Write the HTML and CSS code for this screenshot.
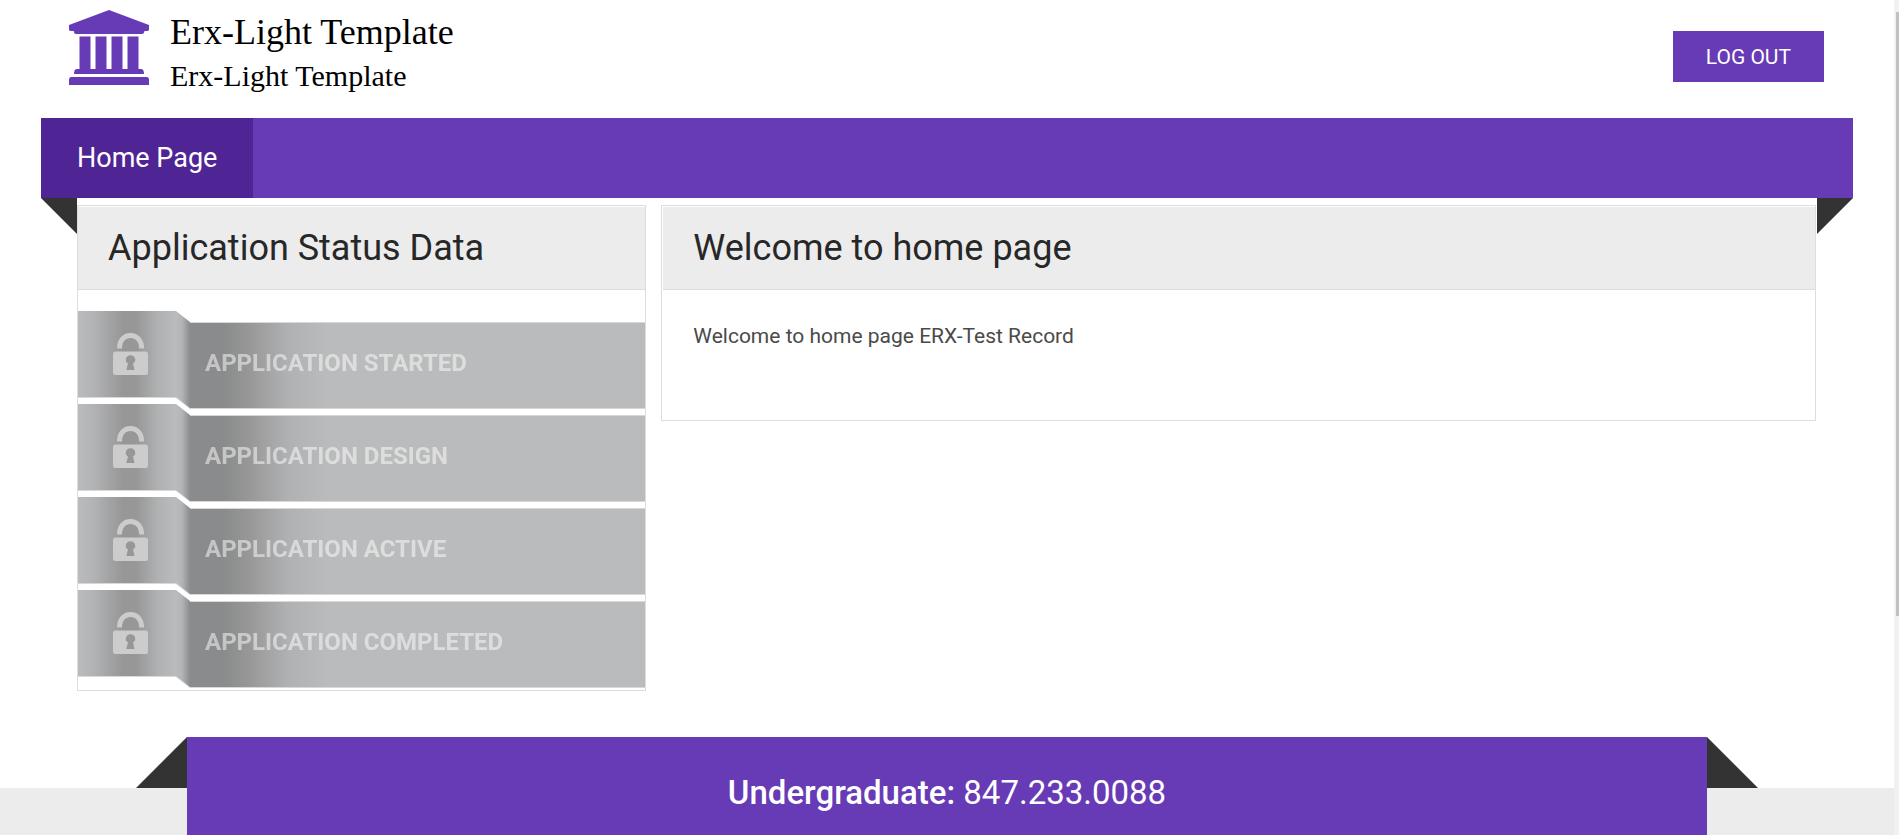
FILE: index.html
```html
<!DOCTYPE html>
<html lang="en">
<head>
    <meta charset="UTF-8">
    <meta name="viewport" content="width=device-width, initial-scale=1.0">
    <title>Erx-Light Template</title>
    <link rel="stylesheet" href="styles.css">
</head>
<body>
    <svg class="symbols" aria-hidden="true">
        <symbol id="lock" viewBox="0 0 35 43">
            <path d="M4 15.500C4 6 9.500 0 17.500 0S31.200 6 31.200 15.500H26.200C26.200 9 22.500 5 17.500 5S9 9 9 15.500Z"/>
            <path fill-rule="evenodd" d="M2.500 18.500H32.500Q35 18.500 35 21V39.500Q35 42 32.500 42H2.500Q0 42 0 39.500V21Q0 18.500 2.500 18.500ZM13.300 37H21.500L20 30.500Q22.300 29 22.300 27A4.800 4.800 0 0 0 12.700 27Q12.700 29 15 30.500Z"/>
        </symbol>
    </svg>

    <header class="header">
        <svg class="logo" viewBox="0 0 80 75" aria-hidden="true">
            <path d="M40 0L80 15V19.500Q80 21 78 21H75.500Q75 24 73 24H7Q5 24 4.800 21H2Q0 21 0 19.500V15Z"/>
            <path d="M10.500 26.500H21.500V59H26.500V26.500H37.500V59H42.500V26.500H53.500V59H58.500V26.500H69.500V59H72.500Q75 59.500 75 64H5Q5 59.500 7.500 59H10.500Z"/>
            <path d="M2.500 67H77.500Q80 67 80 70V75H0V70Q0 67 2.500 67Z"/>
        </svg>
        <div class="brand">
            <div class="brand-title">Erx-Light Template</div>
            <div class="brand-subtitle">Erx-Light Template</div>
        </div>
        <button type="button" class="logout">LOG OUT</button>
    </header>

    <nav class="nav">
        <a href="#" class="nav-link">Home Page</a>
    </nav>

    <main class="content">
        <section class="card status-card">
            <h2>Application Status Data</h2>
            <ul class="status-list">
                <li><svg class="lock"><use href="#lock"/></svg><span>APPLICATION STARTED</span></li>
                <li><svg class="lock"><use href="#lock"/></svg><span>APPLICATION DESIGN</span></li>
                <li><svg class="lock"><use href="#lock"/></svg><span>APPLICATION ACTIVE</span></li>
                <li><svg class="lock"><use href="#lock"/></svg><span>APPLICATION COMPLETED</span></li>
            </ul>
        </section>
        <section class="card welcome-card">
            <h2>Welcome to home page</h2>
            <p>Welcome to home page ERX-Test Record</p>
        </section>
    </main>

    <footer class="footer">
        <div class="contact"><strong>Undergraduate:</strong> 847.233.0088</div>
    </footer>

    <div class="scrollbar"></div>
</body>
</html>
```

FILE: styles.css
```css
* {
    box-sizing: border-box;
}
body {
    display: flex;
    flex-direction: column;
    min-height: 100vh;
    margin: 0;
    padding-right: 5px;
    font-family: Roboto, Arial, sans-serif;
    background-color: #fff;
}
.symbols {
    position: absolute;
    width: 0;
    height: 0;
}

/* header */
.header {
    display: flex;
    align-items: flex-start;
    padding: 10px 70px 0 69px;
    height: 118px;
}
.logo {
    width: 80px;
    height: 75px;
    margin-right: 21px;
    fill: #673ab6;
}
.brand {
    font-family: "Liberation Serif", "Times New Roman", serif;
    color: #000;
}
.brand-title {
    font-size: 36px;
    line-height: 44px;
}
.brand-subtitle {
    font-size: 30px;
    line-height: 44px;
}
.logout {
    margin: 21px 0 0 auto;
    padding: 0 33px;
    height: 51px;
    border: none;
    background-color: #673ab6;
    color: #fff;
    font-family: inherit;
    font-size: 21px;
    cursor: pointer;
}

/* navigation ribbon */
.nav {
    position: relative;
    display: flex;
    height: 80px;
    margin: 0 41px;
    background-color: #673ab6;
}
.nav::before,
.nav::after {
    content: "";
    position: absolute;
    top: 100%;
    width: 36px;
    height: 36px;
    background-color: #333;
}
.nav::before {
    left: 0;
    clip-path: polygon(0 0, 100% 0, 100% 100%);
}
.nav::after {
    right: 0;
    clip-path: polygon(0 0, 100% 0, 0 100%);
}
.nav-link {
    padding: 0 36px;
    background-color: #4f2595;
    color: #fff;
    font-size: 27px;
    line-height: 80px;
    text-decoration: none;
}

/* cards */
.content {
    display: flex;
    align-items: flex-start;
    gap: 15px;
    padding: 7px 78px 46px 77px;
}
.card {
    min-width: 0;
    border: 1px solid #ddd;
    padding-top: 1px;
}
.status-card {
    flex: 569 1 0;
}
.welcome-card {
    flex: 1155 1 0;
    padding-left: 1px;
}
.card h2 {
    margin: 0;
    padding: 0 30px;
    border-bottom: 1px solid #ddd;
    background-color: #ececec;
    color: #272727;
    font-size: 36px;
    font-weight: 400;
    line-height: 82px;
}
.card p {
    margin: 0;
    padding: 31px 30px 69px;
    color: #4a4a4a;
    font-size: 21px;
    line-height: 30px;
}

/* status steps */
.status-list {
    margin: 0;
    padding: 21px 0 3px;
    list-style: none;
    filter: drop-shadow(0 1px 0 #d8d8d8);
}
.status-list li {
    display: flex;
    align-items: center;
    height: 97px;
    padding-left: 35px;
    background:
        linear-gradient(#d8d8d8, #d8d8d8) 112px 11px / 100% 1px no-repeat,
        linear-gradient(to right, #babbbd 0, #b3b4b6 14px, #979797 45px, #979797 58px, #b0b1b2 80px, #babbbd 98px, #b3b4b5 104px, #8a8b8c 112px, #8a8b8c 146px, #989898 172px, #b0b1b3 210px, #babbbc 250px);
    clip-path: polygon(0 0, 98px 0, 112px 11px, 100% 11px, 100% 97px, 112px 97px, 98px 86px, 0 86px);
    color: rgba(255, 255, 255, 0.5);
    font-size: 24px;
    font-weight: 700;
}
.status-list li + li {
    margin-top: -4px;
}
.lock {
    width: 35px;
    height: 43px;
    margin: 0 57px 10px 0;
    fill: #ccc;
}
.status-list span {
    padding-top: 7px;
}

/* footer */
.footer {
    position: relative;
    flex: 1;
    display: flex;
    padding: 0 187px;
    background: linear-gradient(#fff 51px, #ececec 51px);
}
.contact {
    position: relative;
    flex: 1;
    padding: 34px 0 18px;
    background-color: #673ab6;
    color: #fff;
    font-size: 33px;
    line-height: 44px;
    text-align: center;
}
.contact strong {
    font-weight: 500;
}
.contact::before,
.contact::after {
    content: "";
    position: absolute;
    top: 0;
    width: 51px;
    height: 51px;
    background-color: #333;
}
.contact::before {
    right: 100%;
    clip-path: polygon(100% 0, 100% 100%, 0 100%);
}
.contact::after {
    left: 100%;
    clip-path: polygon(0 0, 100% 100%, 0 100%);
}

.scrollbar {
    position: fixed;
    top: 0;
    right: 0;
    width: 5px;
    height: 100%;
    background-color: #f1f1f1;
}
.scrollbar::before {
    content: "";
    position: absolute;
    top: 12px;
    left: 2px;
    right: 0;
    height: 604px;
    background-color: #c1c1c1;
}
```
